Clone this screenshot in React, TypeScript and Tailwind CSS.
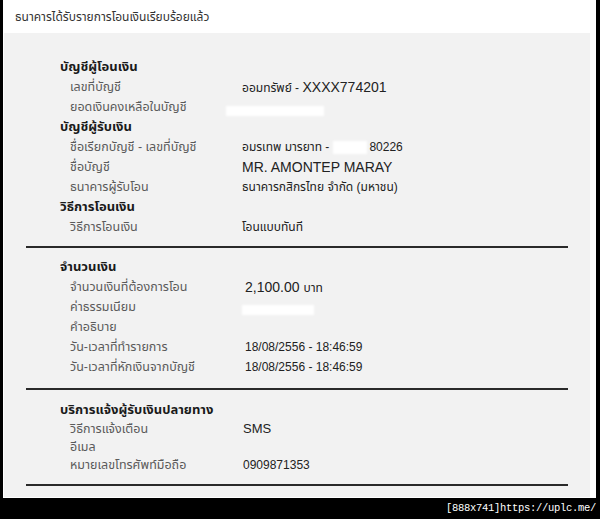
import React from "react";

type Row = { label: string; value?: React.ReactNode };
type Section = { title: string; rows: Row[] };

const thai = "font-['Tahoma','Liberation_Sans','Noto_Sans_Thai','Noto_Sans',sans-serif]";
const arial = "font-['Liberation_Sans','Noto_Sans_Thai',sans-serif]";

// white smudge where the original was blanked out
const Blank = ({ w, h = 12 }: { w: number; h?: number }) => (
  <span
    className="inline-block bg-white blur-[1px] align-middle"
    style={{ width: w, height: h }}
  />
);

const transfer: Section[] = [
  {
    title: "บัญชีผู้โอนเงิน",
    rows: [
      {
        label: "เลขที่บัญชี",
        value: (
          <span className="text-[12px]">
            ออมทรัพย์ - <span className="text-[14px]">XXXX774201</span>
          </span>
        ),
      },
      { label: "ยอดเงินคงเหลือในบัญชี", value: <span className="-ml-[16px] mt-[6px] inline-block"><Blank w={98} h={10} /></span> },
    ],
  },
  {
    title: "บัญชีผู้รับเงิน",
    rows: [
      {
        label: "ชื่อเรียกบัญชี - เลขที่บัญชี",
        value: (
          <span className="flex items-center text-[12px]">
            อมรเทพ มารยาท -<span className="ml-[4px] mr-[2px]"><Blank w={34} h={13} /></span>80226
          </span>
        ),
      },
      { label: "ชื่อบัญชี", value: <span className="text-[14px]">MR. AMONTEP MARAY</span> },
      { label: "ธนาคารผู้รับโอน", value: <span className="text-[12px]">ธนาคารกสิกรไทย จำกัด (มหาชน)</span> },
    ],
  },
  {
    title: "วิธีการโอนเงิน",
    rows: [{ label: "วิธีการโอนเงิน", value: <span className="text-[12px]">โอนแบบทันที</span> }],
  },
];

const amount: Section = {
  title: "จำนวนเงิน",
  rows: [
    {
      label: "จำนวนเงินที่ต้องการโอน",
      value: (
        <span className="text-[14px]">
          2,100.00 <span className="text-[12px]">บาท</span>
        </span>
      ),
    },
    { label: "ค่าธรรมเนียม", value: <span className="-ml-[3px] mt-[4px] inline-block"><Blank w={72} h={10} /></span> },
    { label: "คำอธิบาย" },
    { label: "วัน-เวลาที่ทำรายการ", value: <span className="text-[12px]">18/08/2556 - 18:46:59</span> },
    { label: "วัน-เวลาที่หักเงินจากบัญชี", value: <span className="text-[12px]">18/08/2556 - 18:46:59</span> },
  ],
};

const notify: Section = {
  title: "บริการแจ้งผู้รับเงินปลายทาง",
  rows: [
    { label: "วิธีการแจ้งเตือน", value: <span className="text-[13px]">SMS</span> },
    { label: "อีเมล" },
    { label: "หมายเลขโทรศัพท์มือถือ", value: <span className="text-[12px]">0909871353</span> },
  ],
};

function Block({ section, valueX, rowH }: { section: Section; valueX: string; rowH: string }) {
  return (
    <div>
      <div className={`flex h-[20px] items-center pl-[56px] text-[13px] font-bold text-[#1a1a1a] ${thai}`}>
        {section.title}
      </div>
      {section.rows.map((r) => (
        <div key={r.label} className={`flex ${rowH} items-center`}>
          <div className={`${valueX} shrink-0 pl-[66px] text-[12.5px] text-[#5a5a5a] ${thai}`}>{r.label}</div>
          <div className={`flex items-center text-[#222] ${arial}`}>{r.value}</div>
        </div>
      ))}
    </div>
  );
}

const Rule = ({ mt }: { mt: string }) => <div className={`${mt} ml-[22px] h-[2px] w-[542px] bg-[#2a2a2a]`} />;

export default function App() {
  return (
    <div className="flex h-[519px] w-[600px] flex-col bg-black">
      <div className="ml-[3px] mr-[4px] flex h-[498px] flex-col bg-white">
        <div className={`flex h-[33px] items-center pl-[12px] text-[12px] text-[#333] ${thai}`}>
          ธนาคารได้รับรายการโอนเงินเรียบร้อยแล้ว
        </div>
        <div className="ml-[1px] mr-[6px] h-[464px] bg-[#f2f2f2] pt-[24px]">
          {transfer.map((s) => (
            <Block key={s.title} section={s} valueX="w-[238px]" rowH="h-[20px]" />
          ))}
          <Rule mt="mt-[9px]" />
          <div className="mt-[9px]">
            <Block section={amount} valueX="w-[241px]" rowH="h-[20px]" />
          </div>
          <Rule mt="mt-[11px]" />
          <div className="mt-[10px]">
            <Block section={notify} valueX="w-[239px]" rowH="h-[18px]" />
          </div>
          <Rule mt="mt-[10px]" />
        </div>
      </div>
      <div className="flex flex-1 items-center justify-end pr-[4px] font-['Liberation_Mono',monospace] text-[10.5px] tracking-[-0.3px] text-white">
        [888x741]https://uplc.me/
      </div>
    </div>
  );
}
